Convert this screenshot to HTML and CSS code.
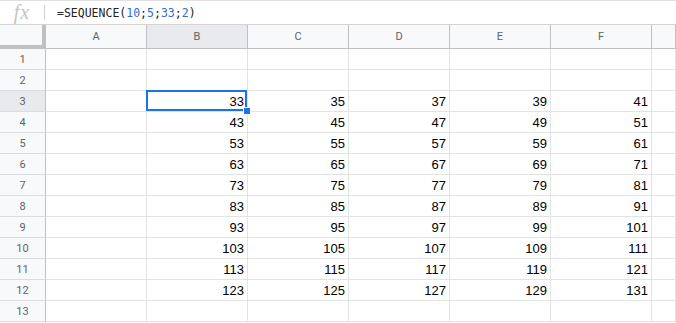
FILE: index.html
```html
<!DOCTYPE html>
<html lang="en">
<head>
  <meta charset="UTF-8">
  <title>SEQUENCE</title>
  <link rel="stylesheet" href="styles.css">
</head>
<body>
  <div class="formula-bar">
    <div class="fx">fx</div>
    <div class="fx-divider"></div>
    <div class="formula">=SEQUENCE(<span class="num">10</span>;<span class="num">5</span>;<span class="num">33</span>;<span class="num">2</span>)</div>
  </div>
  <div id="sheet" class="sheet"></div>
  <script>
    const sheet = document.getElementById('sheet');
    const cols = ['A', 'B', 'C', 'D', 'E', 'F', ''];

    const corner = document.createElement('div');
    corner.className = 'corner';
    sheet.appendChild(corner);
    cols.forEach((c, i) => {
      const h = document.createElement('div');
      h.className = 'col-head' + (c === 'B' ? ' selected' : '');
      h.textContent = c;
      sheet.appendChild(h);
    });

    for (let r = 1; r <= 13; r++) {
      const rh = document.createElement('div');
      rh.className = 'row-head' + (r === 3 ? ' selected' : '');
      rh.textContent = r;
      sheet.appendChild(rh);
      cols.forEach((c, i) => {
        const cell = document.createElement('div');
        cell.className = 'cell';
        if (r >= 3 && r <= 12 && i >= 1 && i <= 5) {
          cell.textContent = 33 + (r - 3) * 10 + (i - 1) * 2;
        }
        if (r === 3 && i === 1) {
          cell.className += ' active';
          const handle = document.createElement('span');
          handle.className = 'handle';
          cell.appendChild(handle);
        }
        sheet.appendChild(cell);
      });
    }
  </script>
</body>
</html>
```

FILE: styles.css
```css
body {
  margin: 0;
  background: #fff;
  font-family: 'Liberation Sans', Arial, sans-serif;
  overflow: hidden;
}

/* formula bar */
.formula-bar {
  display: flex;
  align-items: center;
  height: 23px;
  border-top: 1px solid #e0e0e0;
  border-bottom: 1px solid #d4d4d4;
}

.fx {
  width: 44px;
  text-align: center;
  font-family: 'Liberation Serif', serif;
  font-style: italic;
  font-size: 20px;
  color: #c4c4c4;
  line-height: 23px;
  letter-spacing: 1px;
}

.fx-divider {
  width: 1px;
  height: 15px;
  background: #d0d0d0;
}

.formula {
  margin-left: 12px;
  font-family: 'DejaVu Sans Mono', 'Liberation Mono', monospace;
  font-size: 11.5px;
  color: #222;
  padding-top: 1px;
}

.formula .num {
  color: #2b6ed6;
}

/* grid */
.sheet {
  display: grid;
  grid-template-columns: 46px repeat(6, 101px) 1fr;
  grid-template-rows: 24px repeat(13, 21px);
}

.corner {
  background: #f8f9fa;
  border-right: 4px solid #c0c0c0;
  border-bottom: 4px solid #c0c0c0;
}

.col-head {
  background: #f8f9fa;
  border-right: 1px solid #c0c0c0;
  border-bottom: 1px solid #c0c0c0;
  display: flex;
  align-items: center;
  justify-content: center;
  font-family: Roboto, 'Liberation Sans', sans-serif;
  font-size: 11px;
  color: #5f6368;
}

.row-head {
  background: #f8f9fa;
  border-right: 1px solid #c0c0c0;
  border-bottom: 1px solid #dadce0;
  display: flex;
  align-items: center;
  justify-content: center;
  font-family: Roboto, 'Liberation Sans', sans-serif;
  font-size: 11px;
  color: #5f6368;
}

.col-head.selected,
.row-head.selected {
  background: #e8eaed;
}

.cell {
  border-right: 1px solid #e2e3e3;
  border-bottom: 1px solid #e2e3e3;
  text-align: right;
  padding-right: 3px;
  font-size: 13px;
  line-height: 21px;
  color: #000;
}

/* selected cell */
.cell.active {
  position: relative;
}

.cell.active::after {
  content: '';
  position: absolute;
  top: -1px;
  left: -1px;
  right: 0;
  bottom: 0;
  border: 2px solid #1a73e8;
}

.handle {
  position: absolute;
  right: -4px;
  bottom: -4px;
  width: 6px;
  height: 6px;
  background: #1a73e8;
  border: 1px solid #fff;
  z-index: 2;
}
```
